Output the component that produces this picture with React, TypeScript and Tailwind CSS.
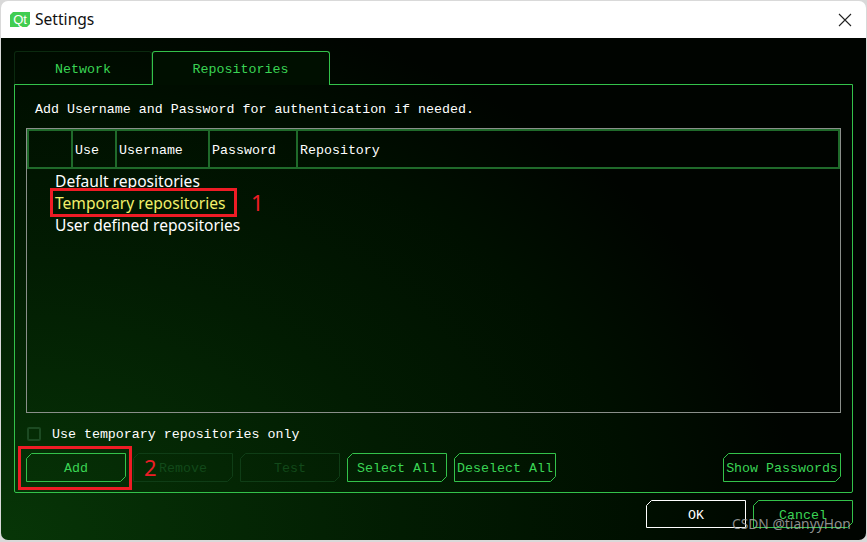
import React from "react";

const mono = "font-['Liberation_Mono',monospace] text-[13.3px] leading-[16px]";

interface ChamferButtonProps {
	label: string;
	width: number;
	height?: number;
	tone?: "green" | "dim" | "white";
	squareEnd?: boolean;
	className?: string;
	textClass?: string;
}

const strokeColors = {
	green: "#33c24a",
	dim: "#0f3d16",
	white: "#ffffff",
};

const textColors = {
	green: "text-[#3ad454]",
	dim: "text-[#12491a]",
	white: "text-white",
};

// Qt's stylesheet cuts the top left and bottom right corners of its buttons
const ChamferButton: React.FC<ChamferButtonProps> = ({
	label,
	width,
	height = 29,
	tone = "green",
	squareEnd = false,
	className = "",
	textClass = "pt-[2px]",
}) => {
	const r = width - 0.5;
	const b = height - 0.5;
	const points = squareEnd
		? `5.5,0.5 ${r},0.5 ${r},${b} 0.5,${b} 0.5,5.5`
		: `5.5,0.5 ${r},0.5 ${r},${b - 5} ${r - 5},${b} 0.5,${b} 0.5,5.5`;

	return (
		<div
			className={`relative flex shrink-0 items-center justify-center ${mono} ${textColors[tone]} ${className}`}
			style={{ width, height }}
		>
			<svg className="absolute inset-0" width={width} height={height} fill="none">
				<polygon points={points} stroke={strokeColors[tone]} strokeWidth="1" />
			</svg>
			<span className={`whitespace-nowrap ${textClass}`}>{label}</span>
		</div>
	);
};

const columns = [
	{ label: "", width: "w-[44px]" },
	{ label: "Use", width: "w-[44px]" },
	{ label: "Username", width: "w-[93px]" },
	{ label: "Password", width: "w-[88px]" },
	{ label: "Repository", width: "flex-1" },
];

const App: React.FC = () => {
	return (
		<div className="relative h-[542px] w-[867px] overflow-hidden bg-[#d9d9d9] pl-px pt-px">
			<div className="flex h-[539px] w-[865px] flex-col overflow-hidden rounded-[7px]">
				{/* Title bar */}
				<div className="flex h-[37px] shrink-0 items-center bg-white pl-[9px] pr-[14px]">
					<div className="flex h-[15px] w-[20px] items-center justify-center bg-[#41cd52] font-['Liberation_Sans',sans-serif] text-[13px] leading-none text-white [clip-path:polygon(3px_0,100%_0,100%_calc(100%-3px),calc(100%-3px)_100%,0_100%,0_3px)]">
						Qt
					</div>
					<span className="ml-[5px] font-['Noto_Sans',sans-serif] text-[15.6px] text-[#111111]">
						Settings
					</span>
					<svg className="ml-auto" width="14" height="14" viewBox="0 0 14 14" stroke="#222222" strokeWidth="1.1">
						<path d="M1 1l12 12M13 1L1 13" />
					</svg>
				</div>

				{/* Dialog body */}
				<div className="flex flex-1 flex-col bg-[radial-gradient(ellipse_800px_560px_at_0%_100%,#073607,#021c02_50%,#000f00_80%,#000400_100%)] pl-[13px] pr-[12px] pt-[13px]">
					<div className="relative z-10 flex h-[34px] shrink-0 -mb-px">
						<div className={`flex h-[33px] w-[138px] items-center justify-center rounded-t-[3px] border border-b-0 border-[#0b2a0f] pt-[3px] text-[#3ad454] ${mono}`}>
							Network
						</div>
						<div className={`flex h-[34px] w-[178px] items-center justify-center rounded-t-[3px] border border-b-0 border-[#33c24a] bg-[#000f00] pr-px pt-[3px] text-[#3ad454] ${mono}`}>
							Repositories
						</div>
					</div>

					<div className="flex h-[409px] w-[839px] shrink-0 flex-col rounded-b-[2px] border border-[#33c24a] pl-[11px] pr-[10px]">
						<div className={`mt-[17px] pl-[9px] text-white ${mono}`}>
							Add Username and Password for authentication if needed.
						</div>

						{/* Repositories table */}
						<div className="mt-[10px] h-[285px] w-[815px] border border-[#8a8f8a]">
							<div className={`flex h-[40px] border-2 border-[#1f6a2a] text-white ${mono}`}>
								{columns.map((col, i) => (
									<div
										key={i}
										className={`flex items-center pl-[2px] pt-[3px] ${col.width} ${i < columns.length - 1 ? "border-r-2 border-[#1f6a2a]" : ""}`}
									>
										{col.label}
									</div>
								))}
							</div>
							<div className="pl-[28px] pt-px font-['Noto_Sans',sans-serif] text-[15.6px] leading-[22px] text-white">
								<div>Default repositories</div>
								<div className="text-[#f2f06a]">Temporary repositories</div>
								<div>User defined repositories</div>
							</div>
						</div>

						<div className="mt-[14px] flex h-[14px] items-center pl-px">
							<div className="h-[14px] w-[14px] rounded-[2px] border-2 border-[#1c4a22]" />
							<span className={`ml-[11px] pt-[2px] text-white ${mono}`}>Use temporary repositories only</span>
						</div>

						<div className="mt-[12px] flex w-[815px] gap-[7px]">
							<ChamferButton label="Add" width={100} />
							<ChamferButton label="Remove" width={100} tone="dim" />
							<ChamferButton label="Test" width={100} tone="dim" />
							<ChamferButton label="Select All" width={100} />
							<ChamferButton label="Deselect All" width={102} />
							<ChamferButton label="Show Passwords" width={118} className="ml-auto" />
						</div>
					</div>

					<div className="mt-[7px] flex w-[839px] justify-end gap-[7px]">
						<ChamferButton label="OK" width={100} height={28} tone="white" squareEnd textClass="pt-[4px]" />
						<ChamferButton label="Cancel" width={100} height={28} textClass="pt-[4px]" />
					</div>
				</div>
			</div>

			{/* Red annotations drawn on top of the screenshot */}
			<div className="absolute left-[50px] top-[188px] h-[29px] w-[187px] border-[3px] border-[#ee1c25]" />
			<div className="absolute left-[251px] top-[187px] font-['Noto_Sans',sans-serif] text-[22px] leading-[30px] text-[#ee1c25]">
				1
			</div>
			<div className="absolute left-[18px] top-[446px] h-[44px] w-[114px] border-[3px] border-[#ee1c25]" />
			<div className="absolute left-[144px] top-[452px] font-['Noto_Sans',sans-serif] text-[22px] leading-[30px] text-[#ee1c25]">
				2
			</div>
			<div className="absolute left-[732px] top-[514px] font-['Noto_Sans',sans-serif] text-[13.8px] leading-[20px] text-[#a8a8a8]/85">
				CSDN @tianyyHon
			</div>
		</div>
	);
};

export default App;
